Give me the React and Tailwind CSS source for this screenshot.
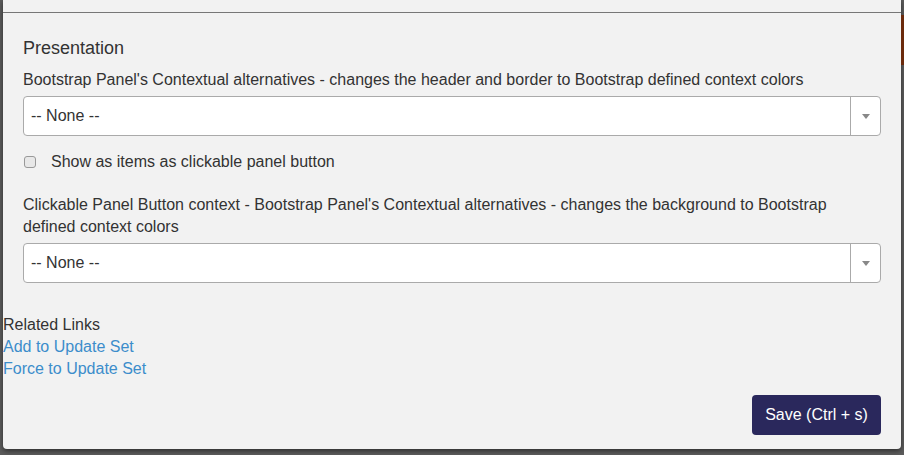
export default function App() {
  const Select = () => (
    <div className="flex h-[40px] w-full items-stretch rounded-[4px] border border-[#aaaaaa] bg-white">
      <div className="flex flex-1 items-center pl-[7px] text-[16px] text-[#333]">-- None --</div>
      <div className="flex w-[30px] items-center justify-center border-l border-[#aaaaaa]">
        <svg width="8" height="5" viewBox="0 0 8 5"><path d="M0 0 L8 0 L4 5 Z" fill="#888" /></svg>
      </div>
    </div>
  );
  return (
    <div
      className="flex h-[455px] w-[904px] overflow-hidden bg-[#5c5c5c]"
      style={{ fontFamily: '"Liberation Sans", Arial, sans-serif' }}
    >
      <div className="ml-[3px] flex h-[449px] w-[898px] flex-col rounded-b-[4px] bg-[#f2f2f2] text-[#333] shadow-[0_2px_5px_rgba(0,0,0,0.5)]">
        <div className="h-[13px] shrink-0 border-b border-[#777]" />
        <div className="px-[20px]">
          <div className="mt-[25px] text-[18px] leading-[20px]">Presentation</div>
          <div className="mt-[11px] text-[16px] leading-[22px]">
            Bootstrap Panel's Contextual alternatives - changes the header and border to Bootstrap defined context colors
          </div>
          <div className="mt-[5px]"><Select /></div>
          <div className="mt-[15px] flex h-[22px] items-center">
            <div className="ml-[1px] h-[12px] w-[12px] rounded-[3px] border border-[#999] bg-[#e8e8e8]" />
            <span className="ml-[15px] text-[16px] leading-[22px]">Show as items as clickable panel button</span>
          </div>
          <div className="mt-[21px] text-[16px] leading-[22px]">
            Clickable Panel Button context - Bootstrap Panel's Contextual alternatives - changes the background to Bootstrap defined context colors
          </div>
          <div className="mt-[5px]"><Select /></div>
        </div>
        <div className="mt-[31px] text-[16px] leading-[22px]">
          <div>Related Links</div>
          <div className="text-[#3c8dcb]">Add to Update Set</div>
          <div className="text-[#3c8dcb]">Force to Update Set</div>
        </div>
        <div className="mt-[15px] flex justify-end px-[20px]">
          <button className="h-[40px] w-[129px] rounded-[4px] bg-[#2a285c] text-[16px] text-white">Save (Ctrl + s)</button>
        </div>
      </div>
      <div className="flex flex-1 flex-col">
        <div className="mt-[15px] h-[50px] bg-[#6b2a0c]" />
      </div>
    </div>
  );
}
